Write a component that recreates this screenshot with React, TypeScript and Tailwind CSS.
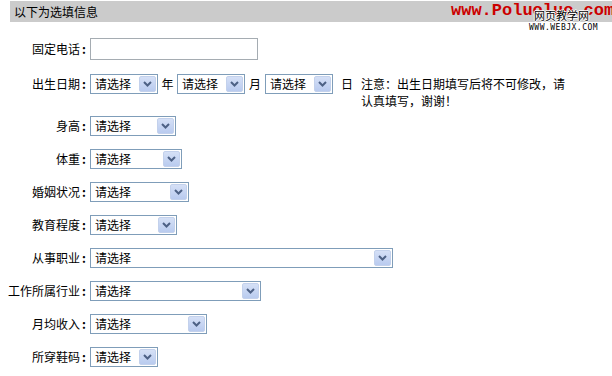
import React from "react"

const font = { fontFamily: '"Noto Sans CJK SC", "Liberation Sans", sans-serif' }

function Arrow() {
  return (
    <span className="absolute right-[1px] top-[1px] bottom-[1px] w-[17px] flex items-center justify-center bg-gradient-to-b from-[#d5e0f6] to-[#b9cbef] border border-[#c3d1ec] rounded-[2px]">
      <svg width="9" height="6" viewBox="0 0 9 6">
        <path d="M1 1 L4.5 4.5 L8 1" fill="none" stroke="#4d6185" strokeWidth="2" />
      </svg>
    </span>
  )
}

function Select({ w }: { w: string }) {
  return (
    <div className={`relative h-[20px] ${w} bg-white border border-[#7f9db9] flex items-center pl-[4px] text-[12px] text-black`}>
      请选择
      <Arrow />
    </div>
  )
}

function Row({ label, children, tall }: { label: string; children: React.ReactNode; tall?: boolean }) {
  return (
    <div className={tall ? "flex items-start h-[44px] pt-[9px]" : "flex items-center h-[33px]"}>
      <div className={`w-[90px] shrink-0 flex justify-end pr-[2px] text-[12px] text-black ${tall ? "leading-[20px]" : ""}`}>
        <span>{label}</span>
        <span className="w-[8px] text-center font-bold">:</span>
      </div>
      {children}
    </div>
  )
}

export default function App() {
  return (
    <div className="relative w-[612px] h-[376px] bg-white overflow-hidden" style={font}>
      {/* header */}
      <div className="mt-[1px] ml-[10px] h-[21px] bg-[#cbcbcb] flex items-center pl-[4px] text-[12px] text-black">
        以下为选填信息
      </div>
      <div className="h-[10px]" />

      <Row label="固定电话">
        <div className="h-[22px] w-[168px] border border-[#a5acb2] bg-white" />
      </Row>

      <Row label="出生日期" tall>
        <div className="flex items-start text-[12px] text-black">
          <Select w="w-[68px]" />
          <span className="w-[19px] text-center leading-[20px]">年</span>
          <Select w="w-[68px]" />
          <span className="w-[20px] text-center leading-[20px]">月</span>
          <Select w="w-[68px]" />
          <span className="w-[28px] text-center leading-[20px]">日</span>
          <span className="w-[206px] leading-[17px] pt-[1px]">注意：出生日期填写后将不可修改，请认真填写，谢谢！</span>
        </div>
      </Row>

      <Row label="身高"><Select w="w-[86px]" /></Row>
      <Row label="体重"><Select w="w-[92px]" /></Row>
      <Row label="婚姻状况"><Select w="w-[99px]" /></Row>
      <Row label="教育程度"><Select w="w-[87px]" /></Row>
      <Row label="从事职业"><Select w="w-[303px]" /></Row>
      <Row label="工作所属行业"><Select w="w-[171px]" /></Row>
      <Row label="月均收入"><Select w="w-[117px]" /></Row>
      <Row label="所穿鞋码"><Select w="w-[68px]" /></Row>

      {/* watermark */}
      <div className="absolute left-[451px] top-[1px] text-[17px] font-bold text-[#cc0000] whitespace-nowrap leading-[20px]" style={{ fontFamily: '"Liberation Mono", monospace' }}>
        www.Poluoluo.com
      </div>
      <div
        className="absolute left-[534px] top-[8px] text-[11px] text-black leading-[14px] whitespace-nowrap"
        style={{ textShadow: "1px 0 #fff, -1px 0 #fff, 0 1px #fff, 0 -1px #fff" }}
      >
        网页教学网
      </div>
      <div className="absolute left-[529px] top-[23px] text-[8px] text-black leading-[10px] tracking-[0.5px] whitespace-nowrap" style={{ fontFamily: '"DejaVu Sans Mono", monospace' }}>
        WWW.WEBJX.COM
      </div>
    </div>
  )
}
